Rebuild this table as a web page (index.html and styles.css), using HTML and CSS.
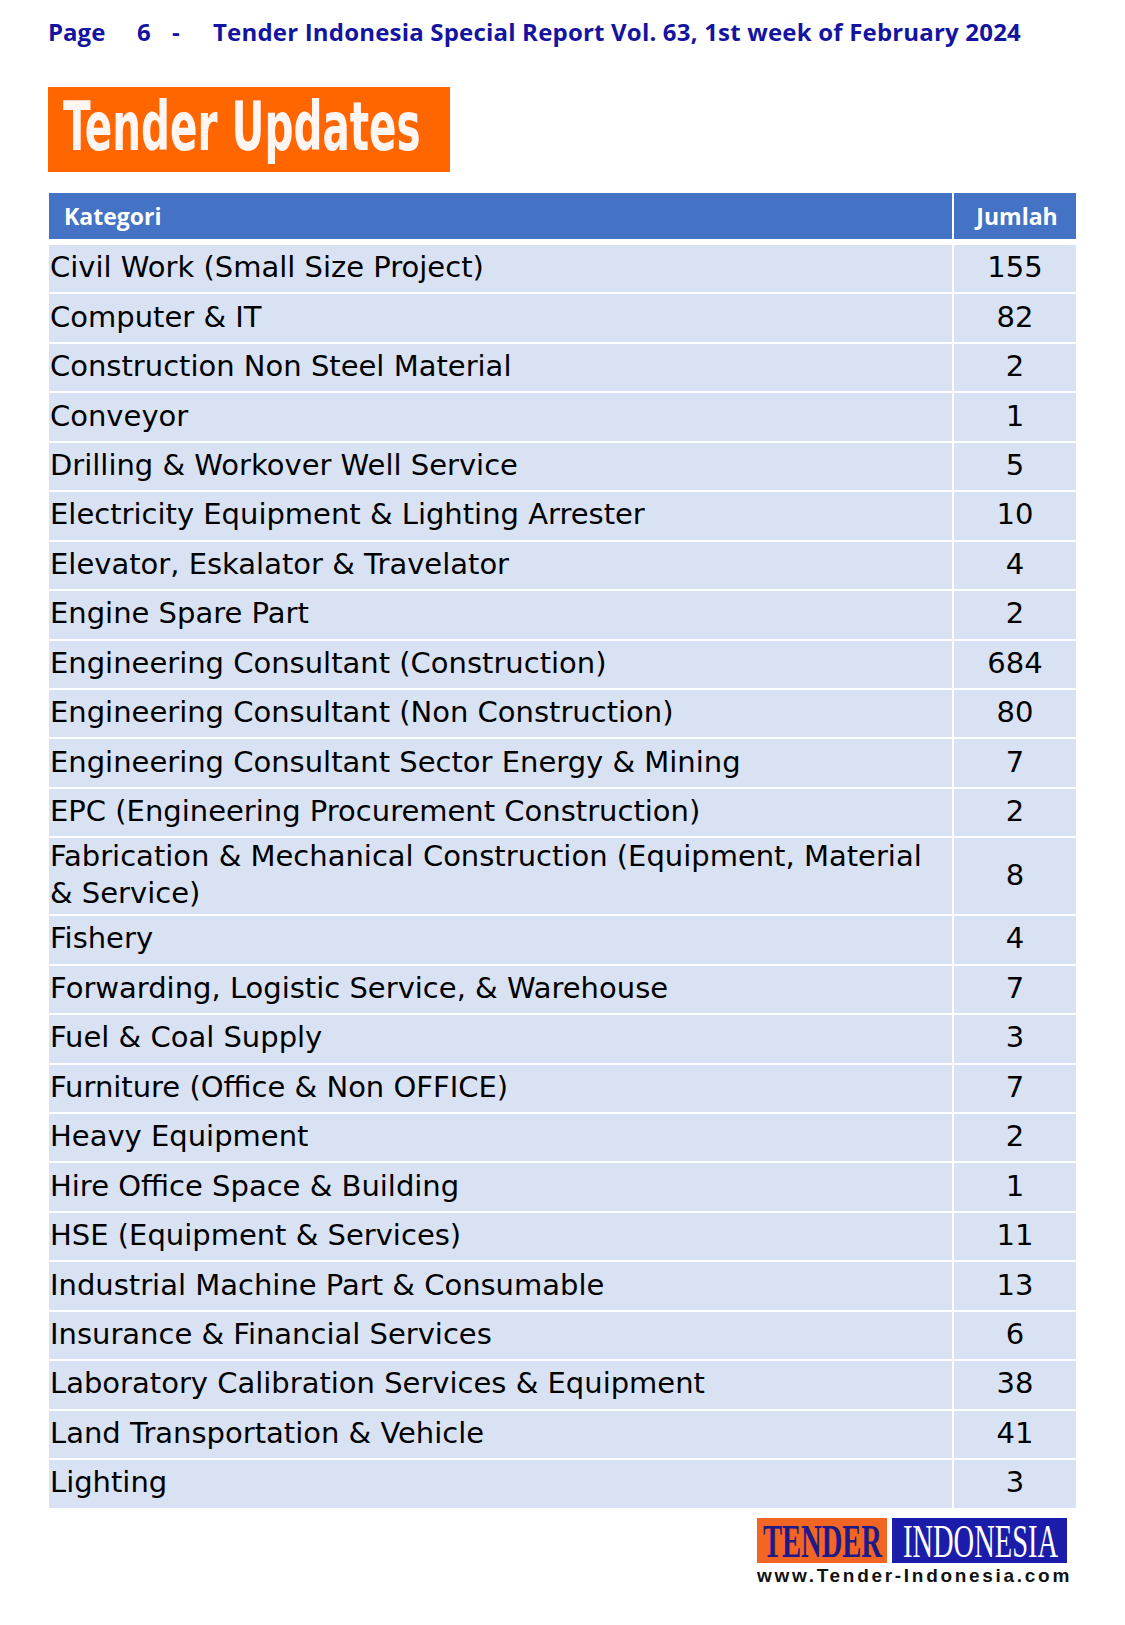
FILE: index.html
```html
<!DOCTYPE html>
<html lang="en">
<head>
<meta charset="utf-8">
<title>Tender Updates</title>
<link rel="stylesheet" href="styles.css">
</head>
<body>
<header class="page-head">
  <span class="ph-page">Page</span><span class="ph-num">6</span><span class="ph-dash">-</span><span class="ph-title">Tender Indonesia Special Report Vol. 63, 1st week of February 2024</span>
</header>

<div class="banner"><h1 class="banner-text">Tender Updates</h1></div>

<div class="tbl">
  <div class="th cat">Kategori</div><div class="th qty">Jumlah</div>
  <div class="td cat">Civil Work (Small Size Project)</div><div class="td qty">155</div>
  <div class="td cat">Computer &amp; IT</div><div class="td qty">82</div>
  <div class="td cat">Construction Non Steel Material</div><div class="td qty">2</div>
  <div class="td cat">Conveyor</div><div class="td qty">1</div>
  <div class="td cat">Drilling &amp; Workover Well Service</div><div class="td qty">5</div>
  <div class="td cat">Electricity Equipment &amp; Lighting Arrester</div><div class="td qty">10</div>
  <div class="td cat">Elevator, Eskalator &amp; Travelator</div><div class="td qty">4</div>
  <div class="td cat">Engine Spare Part</div><div class="td qty">2</div>
  <div class="td cat">Engineering Consultant (Construction)</div><div class="td qty">684</div>
  <div class="td cat">Engineering Consultant (Non Construction)</div><div class="td qty">80</div>
  <div class="td cat">Engineering Consultant Sector Energy &amp; Mining</div><div class="td qty">7</div>
  <div class="td cat">EPC (Engineering Procurement Construction)</div><div class="td qty">2</div>
  <div class="td cat">Fabrication &amp; Mechanical Construction (Equipment, Material<br>&amp; Service)</div><div class="td qty">8</div>
  <div class="td cat">Fishery</div><div class="td qty">4</div>
  <div class="td cat">Forwarding, Logistic Service, &amp; Warehouse</div><div class="td qty">7</div>
  <div class="td cat">Fuel &amp; Coal Supply</div><div class="td qty">3</div>
  <div class="td cat">Furniture (Office &amp; Non OFFICE)</div><div class="td qty">7</div>
  <div class="td cat">Heavy Equipment</div><div class="td qty">2</div>
  <div class="td cat">Hire Office Space &amp; Building</div><div class="td qty">1</div>
  <div class="td cat">HSE (Equipment &amp; Services)</div><div class="td qty">11</div>
  <div class="td cat">Industrial Machine Part &amp; Consumable</div><div class="td qty">13</div>
  <div class="td cat">Insurance &amp; Financial Services</div><div class="td qty">6</div>
  <div class="td cat">Laboratory Calibration Services &amp; Equipment</div><div class="td qty">38</div>
  <div class="td cat">Land Transportation &amp; Vehicle</div><div class="td qty">41</div>
  <div class="td cat">Lighting</div><div class="td qty">3</div>
</div>

<footer class="foot">
  <div class="logo">
    <div class="logo-mark">
      <div class="lm-box lm-orange"><span class="lm-text lm-tender">TENDER</span></div>
      <div class="lm-box lm-blue"><span class="lm-text lm-indo">INDONESIA</span></div>
    </div>
    <div class="logo-url">www.Tender-Indonesia.com</div>
  </div>
</footer>
</body>
</html>
```

FILE: styles.css
```css
html, body {
  margin: 0;
  padding: 0;
  background: #ffffff;
}

body {
  width: 1125px;
  font-family: "DejaVu Sans", Verdana, sans-serif;
  color: #000;
}

.page-head {
  display: flex;
  align-items: baseline;
  padding: 17px 0 0 48px;
  height: 30px;
  font-family: "Open Sans", "Liberation Sans", sans-serif;
  font-weight: 700;
  font-size: 24px;
  line-height: 30px;
  color: #1414a0;
  white-space: nowrap;
}

.ph-page { width: 89px; }
.ph-num { width: 35px; }
.ph-dash { width: 41px; }
.ph-title { letter-spacing: 0.19px; }

.banner {
  margin: 40px 0 0 48px;
  width: 402px;
  height: 85px;
  background: #ff6600;
  overflow: hidden;
}

.banner-text {
  margin: 0;
  padding: 8px 0 0 15px;
  font-family: "DejaVu Sans Condensed", "DejaVu Sans", sans-serif;
  font-stretch: condensed;
  font-weight: 700;
  font-size: 67px;
  line-height: 64px;
  color: #fff6f4;
  white-space: nowrap;
  transform: scaleX(0.672);
  transform-origin: 15px 0;
}

.tbl {
  margin: 21px 0 0 49px;
  display: grid;
  grid-template-columns: 903px 122px;
  column-gap: 2px;
  row-gap: 2px;
  grid-auto-rows: minmax(47.45px, auto);
}

.th {
  height: 46px;
  margin-bottom: 4px;
  background: #4472c4;
  color: #ffffff;
  font-family: "Open Sans", "Liberation Sans", sans-serif;
  font-weight: 700;
  font-size: 23px;
  display: flex;
  align-items: center;
}

.th.cat { padding-left: 15px; }
.th.qty { justify-content: center; padding-left: 4px; }

.td {
  background: #d9e2f3;
  display: flex;
  align-items: center;
  font-size: 29px;
  line-height: 37px;
  padding-bottom: 2px;
  box-sizing: border-box;
}

.td.cat { padding-left: 1px; }
.td.qty { justify-content: center; }

.foot {
  display: flex;
  justify-content: flex-end;
  padding: 10px 54px 0 0;
}

.logo {
  display: flex;
  flex-direction: column;
  width: 314px;
}

.logo-mark {
  display: flex;
  gap: 5px;
  width: 310px;
  height: 45px;
}

.lm-box {
  height: 45px;
  box-sizing: border-box;
  padding-top: 2px;
  white-space: nowrap;
}

.lm-orange { width: 130px; background: #f26522; }
.lm-blue { width: 175px; background: #1c1caa; }

.lm-text {
  display: inline-block;
  font-family: "Liberation Serif", "Times New Roman", serif;
  font-size: 47px;
  line-height: 43px;
  transform-origin: 0 0;
}

.lm-tender {
  margin-left: 6px;
  font-weight: 700;
  color: #1e1a88;
  transform: scaleX(0.607);
}

.lm-indo {
  margin-left: 11px;
  color: #ffffff;
  transform: scaleX(0.606);
}

.logo-url {
  margin-top: 2px;
  font-family: "Liberation Sans", Arial, sans-serif;
  font-weight: 700;
  font-size: 19px;
  line-height: 22px;
  letter-spacing: 2.7px;
  color: #111;
  white-space: nowrap;
}
```
